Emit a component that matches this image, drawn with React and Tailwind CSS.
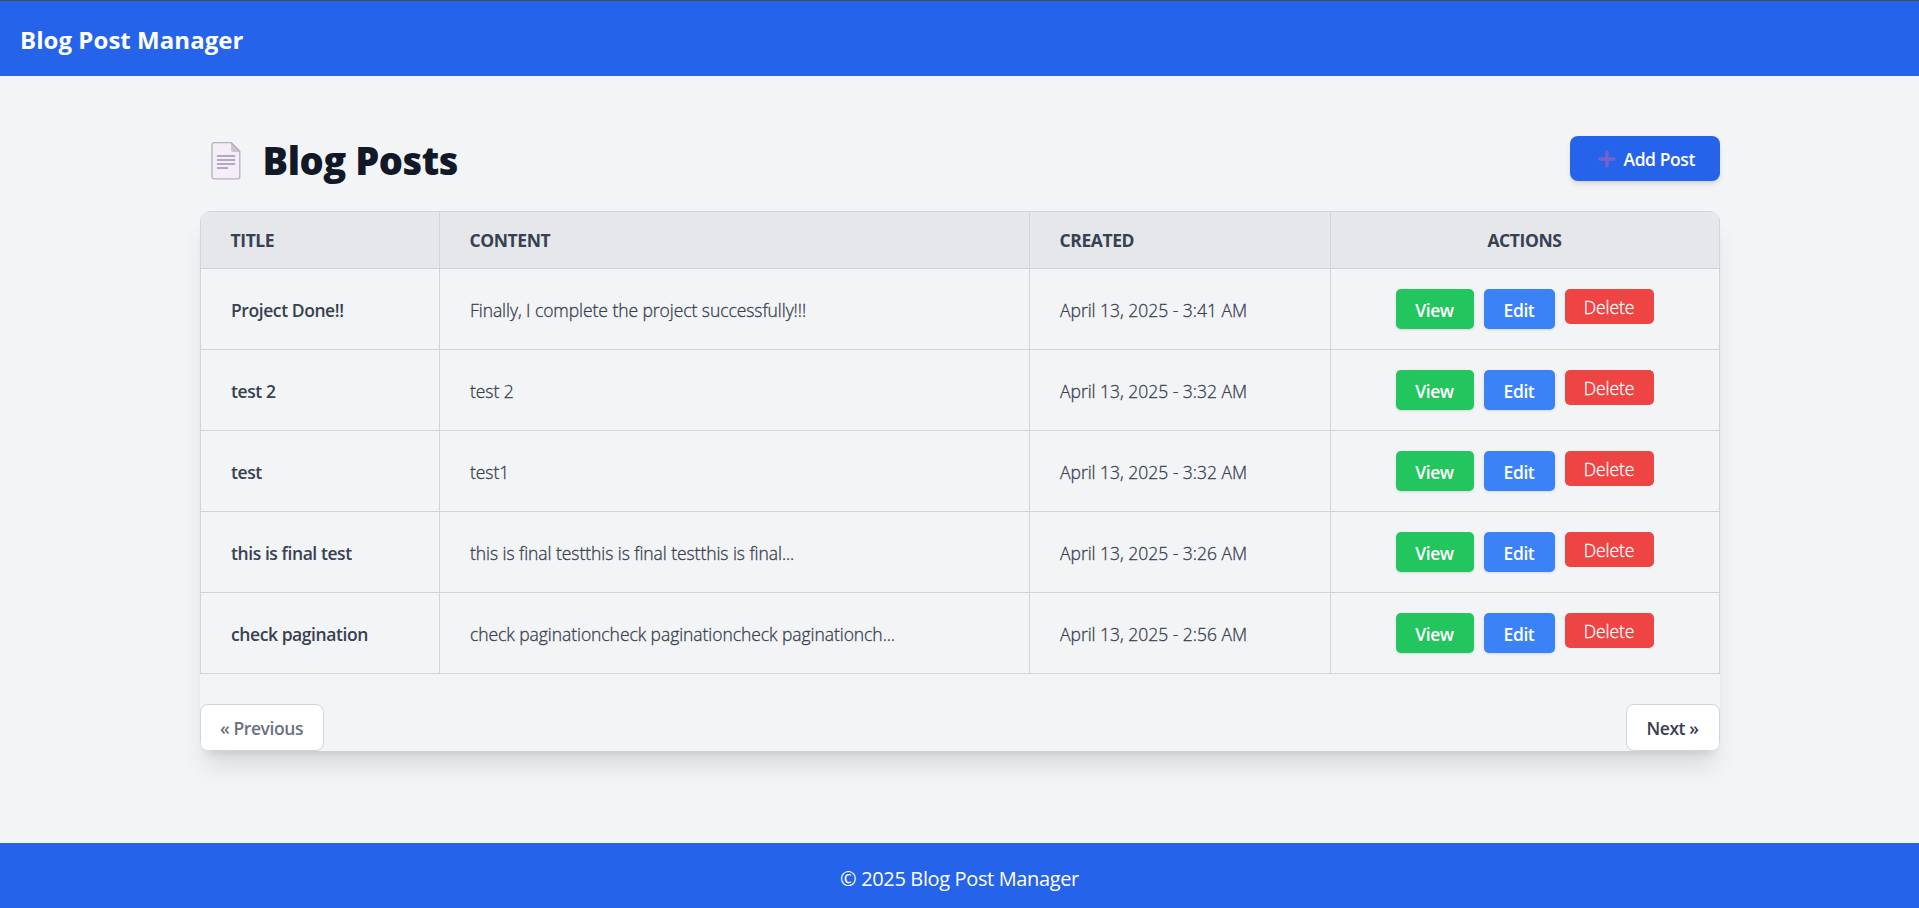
const posts = [
  { title: "Project Done!!", content: "Finally, I complete the project successfully!!!", created: "April 13, 2025 - 3:41 AM" },
  { title: "test 2", content: "test 2", created: "April 13, 2025 - 3:32 AM" },
  { title: "test", content: "test1", created: "April 13, 2025 - 3:32 AM" },
  { title: "this is final test", content: "this is final testthis is final testthis is final...", created: "April 13, 2025 - 3:26 AM" },
  { title: "check pagination", content: "check paginationcheck paginationcheck paginationch...", created: "April 13, 2025 - 2:56 AM" },
];

function PageIcon() {
  return (
    <svg className="ml-[11px] h-[38px] w-[30px] shrink-0" viewBox="0 0 30 38" fill="none">
      <path d="M3 .7h17.2L28.8 9.5V34.8a2 2 0 0 1-2 2H3a2 2 0 0 1-2-2V2.7a2 2 0 0 1 2-2Z" fill="#f3eef8" stroke="#b8b0c2" strokeWidth="1.3" />
      <path d="M20 .8v7.4a1.8 1.8 0 0 0 1.8 1.8h7Z" fill="#cdc4d6" />
      <path d="M20.2.7l8.6 8.8" stroke="#b8b0c2" strokeWidth="1.3" />
      <path d="M6.6 14h16.8M6.6 18h16.8M6.6 22h16.8M6.6 26h9.8" stroke="#b4a7c1" strokeWidth="1.9" strokeLinecap="round" />
    </svg>
  );
}

function PlusIcon() {
  return (
    <svg className="h-[18px] w-[18px]" viewBox="0 0 18 18" fill="none">
      <path d="M9 2v14M2 9h14" stroke="#7e5fc9" strokeWidth="3.4" strokeLinecap="round" />
    </svg>
  );
}

const semi = "font-semibold tracking-[-0.42px]";
const light = "font-light [-webkit-text-stroke:0.3px]";
const head = "border-r border-b border-[#d1d5db] p-0 pl-[30px] font-bold tracking-[-0.4px]";
const cell = "border-r border-b border-[#d1d5db] p-0 pt-[2px] pl-[30.5px]";

export default function App() {
  return (
    <div className="flex min-h-screen flex-col bg-[#f3f4f6] font-['Open_Sans','Noto_Sans',sans-serif] text-[17.5px] leading-7 text-[#374151]">
      <header className="flex h-[76px] items-center border-t border-[#4a4a4a] bg-[#2563eb] pl-5 text-white">
        <span className="pt-[2px] text-[24px] font-bold tracking-[0.05px]">Blog Post Manager</span>
      </header>

      <main className="mx-auto w-[1520px] flex-1 pt-[60px]">
        <div className="flex h-[75px] items-start justify-between">
          <div className="flex h-[50px] items-center text-[#111827]">
            <PageIcon />
            <h1 className="-mt-[2px] ml-[22px] text-[38px] leading-none font-extrabold tracking-[-0.45px]">Blog Posts</h1>
          </div>
          <button className="flex h-[45px] w-[150px] items-center rounded-lg bg-[#2563eb] pl-[28px] text-white shadow-md">
            <PlusIcon />
            <span className={`ml-2 pt-px whitespace-nowrap ${semi}`}>Add Post</span>
          </button>
        </div>

        <div className="h-[540px] overflow-hidden rounded-[10px] shadow-xl">
          <table className="w-full table-fixed border-separate border-spacing-0 border-t border-l border-[#d1d5db]">
            <colgroup>
              <col className="w-[239px]" />
              <col className="w-[590px]" />
              <col className="w-[301px]" />
              <col className="w-[389px]" />
            </colgroup>
            <thead className="bg-[#e5e7eb] text-left">
              <tr className="h-[57px]">
                <th className={head}>TITLE</th>
                <th className={head}>CONTENT</th>
                <th className={head}>CREATED</th>
                <th className="border-r border-b border-[#d1d5db] p-0 text-center font-bold tracking-[-0.4px]">ACTIONS</th>
              </tr>
            </thead>
            <tbody>
              {posts.map((post) => (
                <tr key={post.title} className="h-[81px]">
                  <td className={`${cell} ${semi}`}>{post.title}</td>
                  <td className={`${cell} ${light} tracking-[-0.06px]`}>{post.content}</td>
                  <td className={`${cell} ${light} tracking-[-0.02px]`}>{post.created}</td>
                  <td className="border-r border-b border-[#d1d5db] p-0">
                    <div className="flex h-10 items-start justify-center gap-[10px] text-white">
                      <button className={`h-10 w-[78px] rounded-[5px] bg-[#22c55e] pt-0.5 shadow-sm ${semi}`}>View</button>
                      <button className={`h-10 w-[71px] rounded-[5px] bg-[#3b82f6] pt-0.5 shadow-sm ${semi}`}>Edit</button>
                      <button className={`h-[35px] w-[89px] rounded-[5px] bg-[#ef4444] pt-px tracking-[-0.1px] ${light}`}>Delete</button>
                    </div>
                  </td>
                </tr>
              ))}
            </tbody>
          </table>

          <nav className="mt-[30px] flex justify-between">
            <button className={`h-[47px] w-[124px] rounded-lg border border-[#d1d5db] bg-white pt-px text-[#6b7280] ${semi}`}>« Previous</button>
            <button className={`h-[47px] w-[94px] rounded-lg border border-[#d1d5db] bg-white pt-px ${semi}`}>Next »</button>
          </nav>
        </div>
      </main>

      <footer className="flex h-[65px] items-center justify-center bg-[#2563eb] pt-[7px] text-[20px] tracking-[-0.36px] text-white">
        © 2025 Blog Post Manager
      </footer>
    </div>
  );
}
